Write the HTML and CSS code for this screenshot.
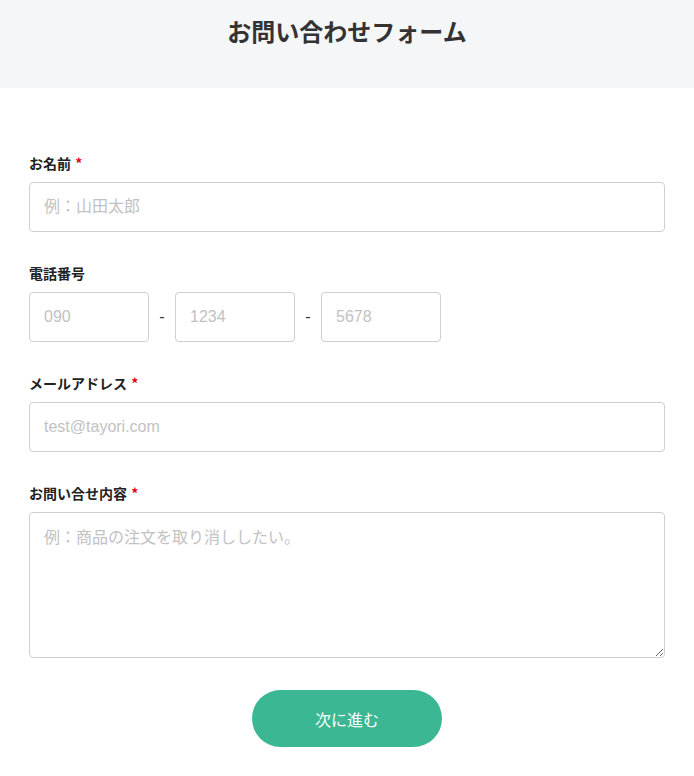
FILE: index.html
```html
<!DOCTYPE html>
<html lang="ja">
<head>
<meta charset="utf-8">
<title>お問い合わせフォーム</title>
<link rel="stylesheet" href="styles.css">
</head>
<body>
<header class="page-header">
  <h1 class="page-title">お問い合わせフォーム</h1>
</header>
<form class="form">
  <div class="field">
    <label class="label">お名前 <span class="req">*</span></label>
    <input class="input" type="text" placeholder="例：山田太郎">
  </div>
  <div class="field">
    <label class="label">電話番号</label>
    <div class="tel-row">
      <input class="input tel" type="text" placeholder="090">
      <span class="dash">-</span>
      <input class="input tel" type="text" placeholder="1234">
      <span class="dash">-</span>
      <input class="input tel" type="text" placeholder="5678">
    </div>
  </div>
  <div class="field">
    <label class="label">メールアドレス <span class="req">*</span></label>
    <input class="input" type="text" placeholder="test@tayori.com">
  </div>
  <div class="field">
    <label class="label">お問い合せ内容 <span class="req">*</span></label>
    <textarea class="input textarea" placeholder="例：商品の注文を取り消ししたい。"></textarea>
  </div>
  <div class="actions">
    <button class="submit" type="button">次に進む</button>
  </div>
</form>
</body>
</html>
```

FILE: styles.css
```css
* { box-sizing: border-box; }
html, body {
  margin: 0;
  padding: 0;
  background: #fff;
  font-family: "Liberation Sans", "Noto Sans CJK JP", sans-serif;
  color: #333;
}
.page-header {
  background: #f5f6f8;
  height: 88px;
  padding-top: 15px;
}
.page-title {
  margin: 0;
  text-align: center;
  font-size: 24px;
  line-height: 32px;
  font-weight: 700;
  color: #333;
  font-family: "Noto Sans CJK JP", sans-serif;
}
.form {
  padding: 66px 29px 0;
}
.field {
  margin-bottom: 32px;
}
.label {
  display: block;
  font-family: "Noto Sans CJK JP", sans-serif;
  font-size: 14px;
  line-height: 18px;
  font-weight: 700;
  color: #222;
  margin-bottom: 10px;
}
.req {
  color: #e60012;
  margin-left: 1px;
}
.input {
  display: block;
  width: 100%;
  height: 50px;
  border: 1px solid #cfcfcf;
  border-radius: 4px;
  padding: 0 14px;
  font-family: "Liberation Sans", "Noto Sans CJK JP", sans-serif;
  font-size: 16px;
  color: #333;
  background: #fff;
  outline: none;
}
.input::placeholder {
  color: #c2c2c2;
}
.tel-row {
  display: flex;
  align-items: center;
  gap: 10px;
}
.input.tel {
  width: 120px;
}
.dash {
  width: 6px;
  font-size: 16px;
  color: #333;
  text-align: center;
}
.textarea {
  height: 146px;
  padding: 14px 14px;
  line-height: 22px;
  resize: vertical;
}
.actions {
  display: flex;
  justify-content: center;
}
.submit {
  width: 190px;
  height: 57px;
  border: none;
  border-radius: 29px;
  background: #3bb794;
  color: #fff;
  font-family: "Noto Sans CJK JP", sans-serif;
  font-size: 16px;
  font-weight: 400;
  cursor: pointer;
}
```
